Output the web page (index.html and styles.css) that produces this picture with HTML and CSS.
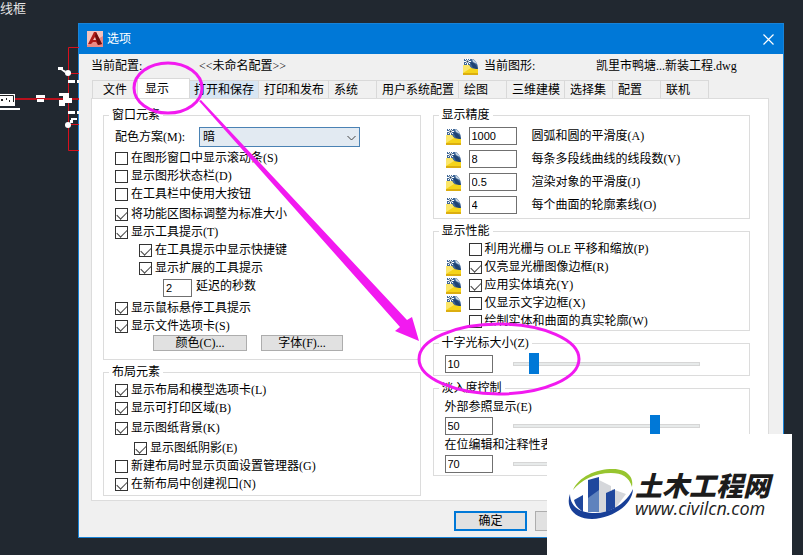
FILE: index.html
```html
<!DOCTYPE html>
<html lang="zh-CN">
<head>
    <meta charset="UTF-8">
    <meta name="viewport" content="width=device-width, initial-scale=1.0">
    <title>选项</title>
    <link rel="stylesheet" href="styles.css">
</head>
<body>

<!-- Shared icons -->
<svg class="defs" width="0" height="0" aria-hidden="true">
    <symbol id="dwg" viewBox="0 0 15 17">
        <path d="M1 1h9c3 2 5 5 5 10H1z" fill="#3f6797"/>
        <path d="M7 4c4 0 7 3 8 8l-5-2z" fill="#1f4373"/>
        <path d="M9 1c3 1 4 3 5 5l-4-2z" fill="#c3d3e2"/>
        <path d="M0 7h6c1 3 4 4 9 4v6H0z" fill="#f5d41a"/>
        <path d="M0 7h6l2 3-8 5z" fill="#fbe66a"/>
        <path d="M0 15h15v2H0z" fill="#dcae10"/>
        <path d="M4.500 0v7M1 3.500h7M2 1l5 5M7 1L2 6" stroke="#fff" stroke-width="1"/>
        <path d="M3.500 3.500h2" stroke="#23405f" stroke-width="2"/>
    </symbol>
</svg>

<svg class="drawing" width="79" height="160" aria-hidden="true">
    <path d="M79 47.500H68.500V150.500H79" fill="none" stroke="#d8101c"/>
    <path d="M15 98h64v2H15z" fill="#b8101c"/>
    <path d="M68 73h11v1H68zM68 124h11v1H68z" fill="#d8101c"/>
    <g fill="#fff">
        <path d="M0 94h15v12H0zM0 108h20v2H0zM36 95h9v3h-9zM37 99h7v3h-7zM58 67h5v3h-5zM62 69l4 2-1 2-4-3z"/>
        <circle cx="68" cy="73" r="3"/>
        <circle cx="68" cy="125" r="3"/>
        <path d="M68 80h7v3h-7zM77 80h2v3h-2zM68 111h7v3h-7zM77 111h2v3h-2zM59 93h10v3H59zM63 96h6v2h3v5h-7v3h-6v-6h4zM71 118h6v2h-6zM70 120h3v3h-3z"/>
    </g>
    <path d="M0 95.500h13.500V102" fill="none" stroke="#222"/>
    <path d="M1 99h2v2H1zM6 98h1v2H6zM9 100h1v2H9z" fill="#222"/>
</svg>
<span class="drawing-label">线框</span>

<main class="dialog">
    <header class="titlebar">
        <svg width="16" height="16" viewBox="0 0 16 16" aria-hidden="true">
            <rect width="16" height="16" fill="#e98a84"/>
            <path d="M0 0h16v5L0 14z" fill="#f6c3bd"/>
            <path d="M1 13L7 1h2l6 12-4 1-2-3H6l-2 2z" fill="#b01c18"/>
            <path d="M9 1l6 12-4 1-3-9z" fill="#6d0d0d"/>
            <path d="M6 9l2-3 1 3z" fill="#f6c3bd"/>
        </svg>
        <h1>选项</h1>
        <button class="close" aria-label="关闭">
            <svg width="11" height="11" viewBox="0 0 11 11"><path d="M.5.5l10 10M10.500.5l-10 10" stroke="#fff" stroke-width="1.200"/></svg>
        </button>
    </header>

    <div class="content">
        <div class="profile">
            <span>当前配置:</span>
            <span>&lt;&lt;未命名配置&gt;&gt;</span>
            <span class="current"><svg class="icon"><use href="#dwg"/></svg>当前图形:</span>
            <span>凯里市鸭塘...新装工程.dwg</span>
        </div>

        <nav class="tabs">
            <button class="tab first">文件</button>
            <button class="tab active">显示</button>
            <button class="tab hover">打开和保存</button>
            <button class="tab">打印和发布</button>
            <button class="tab">系统</button>
            <button class="tab">用户系统配置</button>
            <button class="tab">绘图</button>
            <button class="tab">三维建模</button>
            <button class="tab">选择集</button>
            <button class="tab">配置</button>
            <button class="tab">联机</button>
        </nav>

        <div class="panel">
            <div class="column">
                <fieldset>
                    <legend>窗口元素</legend>
                    <div class="stack">
                        <div class="scheme">
                            <label for="scheme">配色方案(M):</label>
                            <div class="select">
                                <select id="scheme"><option>暗</option></select>
                                <svg width="9" height="6" viewBox="0 0 9 6"><path d="M.5 1l4 4 4-4" fill="none" stroke="#444"/></svg>
                            </div>
                        </div>
                        <div>
                            <label class="check"><input type="checkbox">在图形窗口中显示滚动条(S)</label>
                            <label class="check"><input type="checkbox">显示图形状态栏(D)</label>
                            <label class="check"><input type="checkbox">在工具栏中使用大按钮</label>
                        </div>
                        <div>
                            <label class="check"><input type="checkbox" checked>将功能区图标调整为标准大小</label>
                            <label class="check"><input type="checkbox" checked>显示工具提示(T)</label>
                            <label class="check indent"><input type="checkbox" checked>在工具提示中显示快捷键</label>
                            <label class="check indent"><input type="checkbox" checked>显示扩展的工具提示</label>
                        </div>
                        <div class="delay">
                            <input type="text" id="delay" value="2">
                            <label for="delay">延迟的秒数</label>
                        </div>
                        <div>
                            <label class="check"><input type="checkbox" checked>显示鼠标悬停工具提示</label>
                            <label class="check"><input type="checkbox" checked>显示文件选项卡(S)</label>
                            <div class="buttons">
                                <button class="colors">颜色(C)...</button>
                                <button class="fonts">字体(F)...</button>
                            </div>
                        </div>
                    </div>
                </fieldset>

                <fieldset>
                    <legend>布局元素</legend>
                    <div class="stack">
                        <div>
                            <label class="check"><input type="checkbox" checked>显示布局和模型选项卡(L)</label>
                            <label class="check"><input type="checkbox" checked>显示可打印区域(B)</label>
                        </div>
                        <label class="check"><input type="checkbox" checked>显示图纸背景(K)</label>
                        <div>
                            <label class="check shadow"><input type="checkbox" checked>显示图纸阴影(E)</label>
                            <label class="check"><input type="checkbox">新建布局时显示页面设置管理器(G)</label>
                            <label class="check"><input type="checkbox" checked>在新布局中创建视口(N)</label>
                        </div>
                    </div>
                </fieldset>
            </div>

            <div class="column">
                <fieldset>
                    <legend>显示精度</legend>
                    <div class="precision">
                        <svg class="icon"><use href="#dwg"/></svg>
                        <input type="text" id="arc" value="1000">
                        <label for="arc">圆弧和圆的平滑度(A)</label>
                        <svg class="icon"><use href="#dwg"/></svg>
                        <input type="text" id="segments" value="8">
                        <label for="segments">每条多段线曲线的线段数(V)</label>
                        <svg class="icon"><use href="#dwg"/></svg>
                        <input type="text" id="render" value="0.5">
                        <label for="render">渲染对象的平滑度(J)</label>
                        <svg class="icon"><use href="#dwg"/></svg>
                        <input type="text" id="contour" value="4">
                        <label for="contour">每个曲面的轮廓素线(O)</label>
                    </div>
                </fieldset>

                <fieldset>
                    <legend>显示性能</legend>
                    <div class="performance">
                        <label class="check"><input type="checkbox">利用光栅与 OLE 平移和缩放(P)</label>
                        <svg class="icon"><use href="#dwg"/></svg>
                        <label class="check"><input type="checkbox" checked>仅亮显光栅图像边框(R)</label>
                        <svg class="icon"><use href="#dwg"/></svg>
                        <label class="check"><input type="checkbox" checked>应用实体填充(Y)</label>
                        <svg class="icon"><use href="#dwg"/></svg>
                        <label class="check"><input type="checkbox">仅显示文字边框(X)</label>
                        <label class="check"><input type="checkbox">绘制实体和曲面的真实轮廓(W)</label>
                    </div>
                </fieldset>

                <fieldset>
                    <legend>十字光标大小(Z)</legend>
                    <div class="sliders">
                        <div class="slider">
                            <input type="text" value="10" aria-label="十字光标大小">
                            <input type="range" value="9" aria-label="十字光标大小">
                        </div>
                    </div>
                </fieldset>

                <fieldset>
                    <legend>淡入度控制</legend>
                    <div class="sliders">
                        <label for="xref">外部参照显示(E)</label>
                        <div class="slider">
                            <input type="text" id="xref" value="50">
                            <input type="range" value="78" aria-label="外部参照显示">
                        </div>
                        <label for="inplace">在位编辑和注释性表示</label>
                        <div class="slider">
                            <input type="text" id="inplace" value="70">
                            <input type="range" value="70" aria-label="在位编辑和注释性表示">
                        </div>
                    </div>
                </fieldset>
            </div>
        </div>

        <footer class="actions">
            <button class="ok">确定</button>
            <button>取消</button>
        </footer>
    </div>
</main>

<!-- Marker circles and arrow over the dialog -->
<svg class="marks" width="600" height="420" aria-hidden="true">
    <g fill="none" stroke="#f21af0" stroke-width="3">
        <ellipse cx="168" cy="88" rx="34" ry="25"/>
        <ellipse cx="499" cy="359" rx="80" ry="35"/>
    </g>
    <path d="M199 101l2-1L407 320l5-3 7 24-24-10 5-4z" fill="#f21af0"/>
</svg>

<aside class="watermark">
    <svg width="66" height="54" viewBox="0 0 66 54" aria-hidden="true">
        <path d="M31 12l12 6v26H31zM44 21l14 5-12 16z" fill="#d5d7db"/>
        <path d="M5 22C11 9 27 1 45 1c15 0 21 9 19 18C61 9 54 5 43 5 27 5 13 12 5 22z" fill="#97c52f"/>
        <path d="M20 12l11-3v35H20z" fill="#1f479d"/>
        <path d="M20 30l11-8v22H20z" fill="#5f83bd"/>
        <path d="M6 32l9-5v17C10 40 7 37 6 32zM38 25l9-4v19l-9 4z" fill="#1f479d"/>
        <path d="M2 26c-5 14 5 25 22 25 20-1 40-13 41-30-6 13-21 24-38 24C11 45 2 38 2 26z" fill="#183f97"/>
    </svg>
    <div>
        <strong>土木工程网</strong>
        <span>www.civilcn.com</span>
    </div>
</aside>

</body>
</html>
```
FILE: styles.css
```css
* {
    box-sizing: border-box;
}
body {
    position: relative;
    min-height: 100vh;
    margin: 0;
    padding: 23px 19px 18px 78px;
    background: #212830;
    color: #000;
    font: 12px/14px "Liberation Serif", "Noto Sans CJK SC", serif;
    white-space: nowrap;
}
button, input, select {
    margin: 0;
    font: inherit;
    color: inherit;
}
svg {
    display: block;
    flex: none;
}
.defs, .drawing, .drawing-label, .marks {
    position: absolute;
    top: 0;
    left: 0;
}
.drawing-label {
    color: #e4e4e4;
    font-size: 13px;
    line-height: 18px;
}
.marks {
    pointer-events: none;
}

/* Dialog window */
.dialog {
    border: 1px solid #1883d7;
    background: #f0f0f0;
}
.titlebar {
    display: flex;
    align-items: center;
    gap: 4px;
    height: 30px;
    padding: 0 9px 0 8px;
    background: #0078d7;
    color: #fff;
}
.titlebar h1 {
    margin: 0;
    font-size: 12px;
    font-weight: normal;
}
.close {
    display: flex;
    margin-left: auto;
    padding: 0;
    border: 0;
    background: none;
}
.content {
    padding: 0 14px 0 12px;
}
.profile {
    display: grid;
    grid-template-columns: 108px 264px 133px 1fr;
    align-items: center;
    height: 24px;
}
.current {
    display: flex;
    align-items: center;
    gap: 6px;
}
.icon {
    width: 15px;
    height: 17px;
}

/* Tabs */
.tabs {
    display: flex;
    align-items: flex-end;
    height: 20px;
    padding-left: 1px;
}
.tab {
    min-width: 48px;
    height: 18px;
    padding: 0 4px 0 5px;
    border: 1px solid #d9d9d9;
    border-width: 1px 1px 0 0;
    background: #f0f0f0;
    text-align: left;
}
.tab.first {
    min-width: 46px;
    padding-left: 10px;
    border-left-width: 1px;
}
.tab.active {
    min-width: 52px;
    height: 20px;
    padding-left: 7px;
    background: #fff;
}
.tab.hover {
    padding-left: 4px;
    background: #d8e6f3;
}
.panel {
    display: grid;
    grid-template-columns: 1fr 1fr;
    gap: 12px;
    padding: 9px 18px 4px 11px;
    border: 1px solid #dcdcdc;
    background: #fff;
}
.column {
    display: flex;
    flex-direction: column;
    gap: 5px;
}

/* Groups */
fieldset {
    min-width: 0;
    margin: 0;
    padding: 2px 11px;
    border: 1px solid #dcdcdc;
}
legend {
    margin-left: -6px;
    padding: 0 3px;
}
.stack {
    display: flex;
    flex-direction: column;
    gap: 2px;
}
.check {
    display: flex;
    align-items: center;
    gap: 3px;
    height: 18px;
}
.check input {
    flex: none;
    width: 13px;
    height: 13px;
    border: 1px solid #333;
    background: #fff;
    appearance: none;
}
.check input:checked::before {
    content: "";
    display: block;
    width: 9px;
    height: 5px;
    margin: 2px 0 0 1px;
    border: solid #444;
    border-width: 0 0 1px 1px;
    transform: rotate(-45deg);
}
.indent {
    margin-left: 24px;
}
.shadow {
    margin-left: 19px;
}
input[type="text"] {
    width: 48px;
    height: 18px;
    padding: 0 2px;
    border: 1px solid #707070;
    background: #fff;
    font: 11px "Liberation Sans", sans-serif;
}
.scheme {
    display: flex;
    align-items: center;
    padding-top: 3px;
}
.scheme label {
    width: 84px;
}
.select {
    position: relative;
    width: 161px;
}
.select select {
    display: block;
    width: 100%;
    height: 20px;
    padding: 0 3px;
    border: 1px solid #4a82b4;
    border-radius: 0;
    background: #e2eaf2;
    appearance: none;
}
.select svg {
    position: absolute;
    top: 8px;
    right: 4px;
    pointer-events: none;
}
.delay {
    display: flex;
    gap: 4px;
    padding-left: 48px;
}
.delay input[type="text"] {
    width: 29px;
}
.buttons {
    display: flex;
    gap: 14px;
    padding: 0 0 6px 38px;
}
.buttons button, .actions button {
    height: 16px;
    padding: 0;
    border: 1px solid #adadad;
    background: #e1e1e1;
}
.buttons .colors {
    width: 94px;
}
.buttons .fonts {
    width: 82px;
}
.precision {
    display: grid;
    grid-template-columns: 15px 48px 1fr;
    align-items: center;
    gap: 5px 8px;
    padding: 3px 0 2px 1px;
}
.precision label {
    padding-left: 7px;
}
.performance {
    display: grid;
    grid-template-columns: 15px 1fr;
    align-items: center;
    column-gap: 8px;
    padding-left: 1px;
    margin-bottom: -2px;
}
.performance .check {
    grid-column: 2;
}
.sliders {
    display: flex;
    flex-direction: column;
    gap: 3px;
    padding-top: 3px;
}
.slider {
    display: flex;
    align-items: center;
    gap: 20px;
    height: 18px;
}
input[type="range"] {
    flex: 1;
    min-width: 0;
    height: 21px;
    margin-right: 38px;
    background: none;
    appearance: none;
}
input[type="range"]::-webkit-slider-runnable-track {
    height: 4px;
    border: 1px solid #d6d6d6;
    background: #e7eaea;
}
input[type="range"]::-webkit-slider-thumb {
    width: 10px;
    height: 21px;
    margin-top: -10px;
    background: #0078d7;
    appearance: none;
}
.actions {
    display: flex;
    justify-content: flex-end;
    gap: 8px;
    padding: 10px 161px 6px 0;
}
.actions button {
    width: 73px;
    height: 20px;
}
.actions .ok {
    border: 2px solid #0078d7;
}

/* Site logo in the corner */
.watermark {
    position: absolute;
    right: 11px;
    bottom: 0;
    display: flex;
    align-items: center;
    gap: 1px;
    width: 245px;
    height: 122px;
    padding-left: 21px;
    background: #fff;
    color: #1c1c1c;
}
.watermark strong, .watermark span {
    display: block;
}
.watermark strong {
    font: italic 900 27px/26px "Noto Sans CJK SC", sans-serif;
}
.watermark span {
    font: italic 18px/20px "Open Sans", sans-serif;
}
```
